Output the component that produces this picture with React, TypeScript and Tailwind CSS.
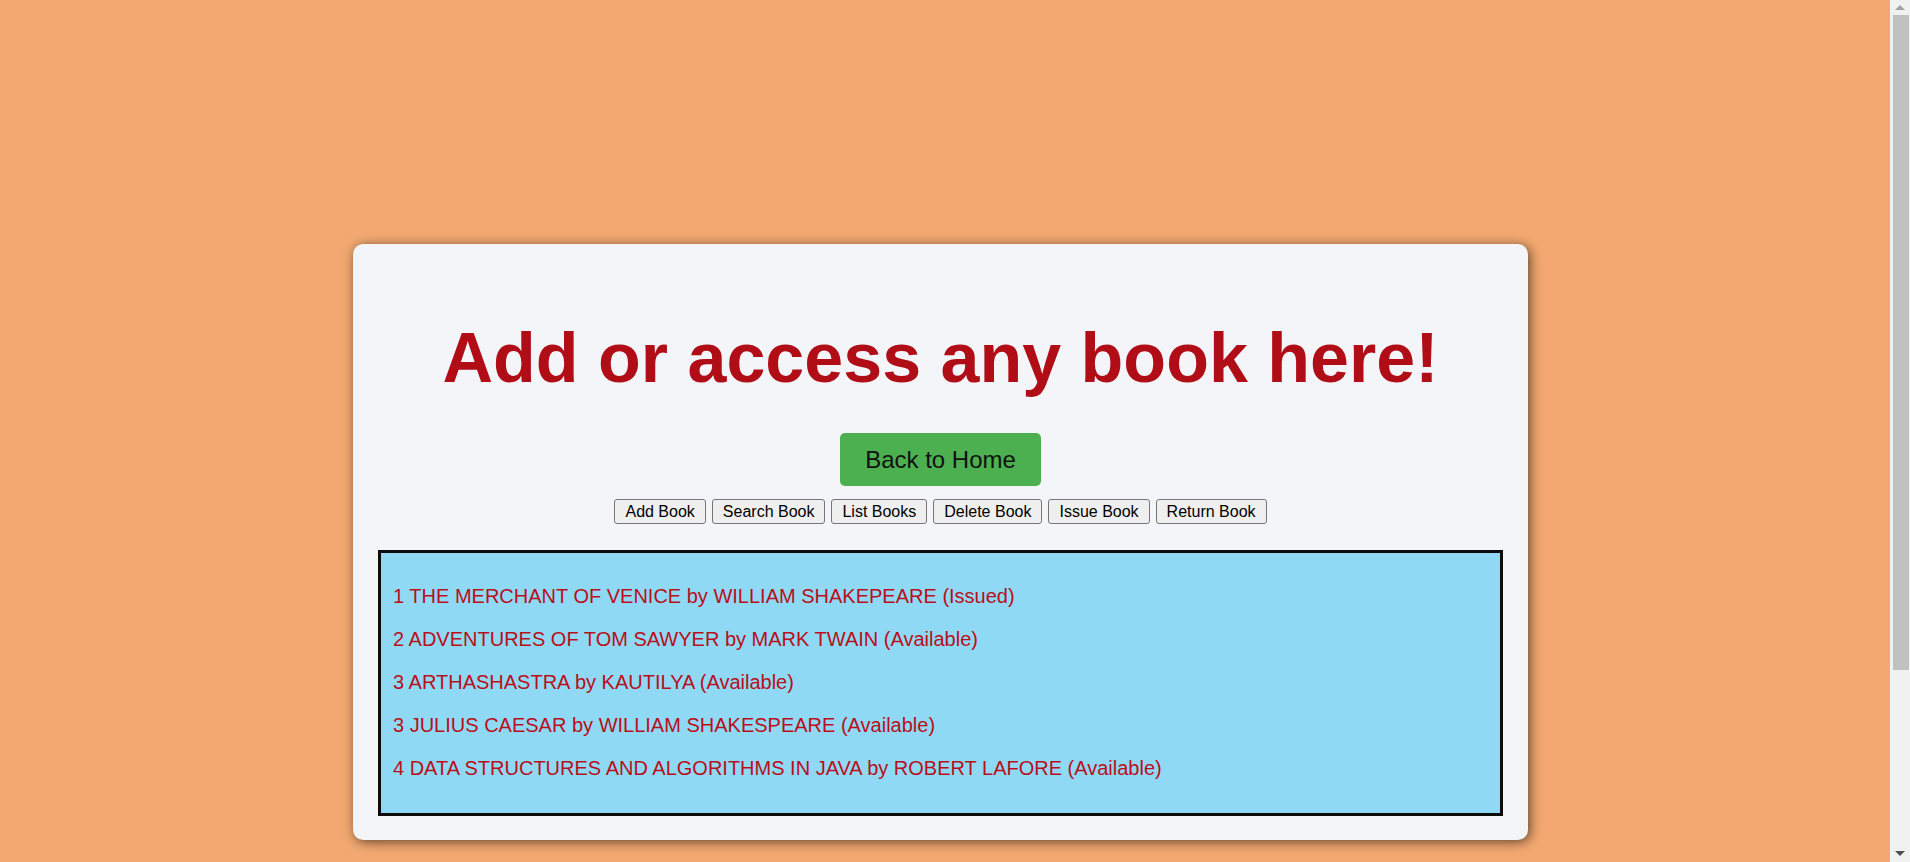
import React from "react";

const books = [
  "1 THE MERCHANT OF VENICE by WILLIAM SHAKEPEARE (Issued)",
  "2 ADVENTURES OF TOM SAWYER by MARK TWAIN (Available)",
  "3 ARTHASHASTRA by KAUTILYA (Available)",
  "3 JULIUS CAESAR by WILLIAM SHAKESPEARE (Available)",
  "4 DATA STRUCTURES AND ALGORITHMS IN JAVA by ROBERT LAFORE (Available)",
];

const actions = ["Add Book", "Search Book", "List Books", "Delete Book", "Issue Book", "Return Book"];

// page scrollbar as seen in the screenshot
const Scrollbar = () => (
  <div className="fixed top-0 right-0 h-full w-[20px] bg-[#f1f1f1] flex flex-col items-center">
    <div className="mt-[5px] h-0 w-0 border-x-[5px] border-b-[5px] border-x-transparent border-b-[#a3a3a3]" />
    <div className="mt-[5px] ml-[1px] h-[655px] w-[16px] bg-[#c1c1c1]" />
    <div className="mt-auto mb-[6px] h-0 w-0 border-x-[5px] border-t-[5px] border-x-transparent border-t-[#505050]" />
  </div>
);

const App = () => {
  return (
    <div className="min-h-[1095px] bg-[#f2a870] pt-[244px] pl-[353px] font-['Liberation_Sans',Arial,sans-serif]">
      <main className="w-[1175px] rounded-[10px] bg-[#f4f5f9] px-[25px] pt-[24px] pb-[24px] shadow-[2px_2px_12px_rgba(0,0,0,0.6)] flex flex-col items-center">
        <h1 className="mt-[50px] text-[70px] leading-[81px] font-bold text-[#b00d17]">
          Add or access any book here!
        </h1>

        <button className="mt-[34px] h-[53px] px-[25px] rounded-[5px] bg-[#4caf50] text-[24px] text-[#111]">
          Back to Home
        </button>

        <div className="mt-[13px] flex gap-[6px]">
          {actions.map((label) => (
            <button
              key={label}
              className="h-[25px] px-[10px] border border-[#767676] rounded-[3px] bg-[#efefef] text-[16px] text-black"
            >
              {label}
            </button>
          ))}
        </div>

        <section className="mt-[26px] w-full h-[266px] border-[3px] border-[#0c0c0c] bg-[#8fd9f5] p-[12px]">
          {books.map((b) => (
            <p key={b} className="my-5 text-[20px] leading-[23px] text-[#b80f1a]">
              {b}
            </p>
          ))}
        </section>
      </main>
      <Scrollbar />
    </div>
  );
};

export default App;
